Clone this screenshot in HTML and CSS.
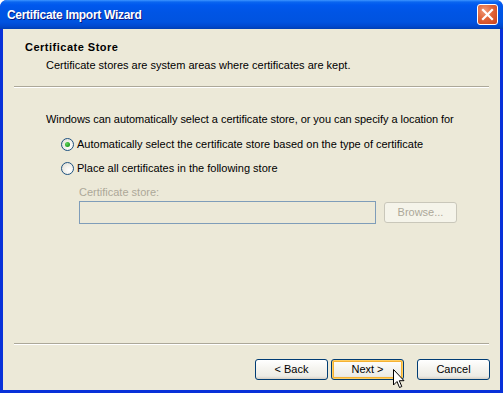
FILE: index.html
```html
<!DOCTYPE html>
<html lang="en">

<head>
    <meta charset="UTF-8">
    <title>Certificate Import Wizard</title>
    <link rel="stylesheet" href="styles.css">
</head>

<body>
    <div class="window">
        <div class="titlebar">
            <span class="title">Certificate Import Wizard</span>
            <div class="close-btn">
                <svg width="13" height="13" viewBox="0 0 13 13">
                    <path d="M2 2 L11 11 M11 2 L2 11" stroke="#fff" stroke-width="2.2" stroke-linecap="square" />
                </svg>
            </div>
        </div>
        <div class="client">
            <div class="header">
                <div class="header-title">Certificate Store</div>
                <div class="header-sub">Certificate stores are system areas where certificates are kept.</div>
            </div>
            <div class="separator"></div>
            <div class="body">
                <div class="intro">Windows can automatically select a certificate store, or you can specify a location for</div>
                <div class="radio-row">
                    <span class="radio checked"></span>
                    <span>Automatically select the certificate store based on the type of certificate</span>
                </div>
                <div class="radio-row">
                    <span class="radio"></span>
                    <span>Place all certificates in the following store</span>
                </div>
                <div class="store-group">
                    <div class="store-label">Certificate store:</div>
                    <div class="store-row">
                        <div class="store-input"></div>
                        <div class="btn disabled">Browse...</div>
                    </div>
                </div>
            </div>
            <div class="separator"></div>
            <div class="footer">
                <div class="btn">&lt; Back</div>
                <div class="btn default">Next &gt;</div>
                <div class="btn cancel">Cancel</div>
            </div>
        </div>
        <svg class="cursor" width="13" height="20" viewBox="0 0 13 20">
            <path d="M0.5 0.5 L0.5 16 L4 12.5 L6.5 18.5 L8.8 17.5 L6.3 11.7 L11 11.7 Z" fill="#fff" stroke="#000" stroke-width="1" stroke-linejoin="miter" />
        </svg>
    </div>
</body>

</html>
```

FILE: styles.css
```css
body {
    margin: 0;
    padding: 0;
    background: #fff;
    font-family: "Liberation Sans", Arial, sans-serif;
    font-size: 11px;
    color: #000;
}

.window {
    position: relative;
    width: 503px;
    height: 393px;
    box-sizing: border-box;
    display: flex;
    flex-direction: column;
    background: #0831d9;
    border-radius: 7px 7px 0 0;
    overflow: hidden;
}

.titlebar {
    height: 29px;
    flex: none;
    display: flex;
    align-items: center;
    justify-content: space-between;
    padding: 0 5px 0 7px;
    background: linear-gradient(to bottom, #3d95ff 0px, #0a66f0 2px, #0058ee 5px, #0055e5 12px, #0053e0 22px, #0049d0 26px, #003fb4 29px);
}

.title {
    color: #fff;
    font-family: "Liberation Sans", Arial, sans-serif;
    font-weight: bold;
    font-size: 12px;
    letter-spacing: -0.3px;
    text-shadow: 1px 1px 0 #0a1883;
    margin-top: 1px;
}

.close-btn {
    width: 19px;
    height: 19px;
    border: 1px solid #fff;
    border-radius: 3px;
    background: radial-gradient(circle at 35% 30%, #f09a78 0%, #e06438 45%, #c8401a 100%);
    display: flex;
    align-items: center;
    justify-content: center;
}

.client {
    flex: 1;
    display: flex;
    flex-direction: column;
    background: #ece9d8;
    margin: 0 3px 3px 3px;
    line-height: 13px;
}

.header {
    padding: 12px 0 14px 22px;
}

.header-title {
    font-weight: bold;
    letter-spacing: 0.5px;
}

.header-sub {
    margin-top: 5px;
    padding-left: 21px;
}

.separator {
    height: 1px;
    margin: 0 11px;
    background: #aca899;
    border-bottom: 1px solid #fff;
}

.body {
    flex: 1;
    padding: 25px 0 0 43px;
}

.intro {
    letter-spacing: -0.05px;
}

.radio-row {
    display: flex;
    align-items: center;
    gap: 3px;
    margin-top: 11px;
    padding-left: 15px;
}

.intro + .radio-row {
    margin-top: 12px;
}

.radio {
    width: 11px;
    height: 11px;
    border: 1px solid #1c5180;
    border-radius: 50%;
    background: radial-gradient(circle at 65% 65%, #fff 0%, #f4f3ee 40%, #dcdad0 100%);
    display: flex;
    align-items: center;
    justify-content: center;
}

.radio.checked::after {
    content: "";
    width: 5px;
    height: 5px;
    border-radius: 50%;
    background: radial-gradient(circle at 35% 35%, #62d45e 0%, #2aa428 60%, #1a8a1a 100%);
}

.store-group {
    padding-left: 33px;
    margin-top: 11px;
}

.store-label {
    color: #aca899;
}

.store-row {
    display: flex;
    align-items: center;
    gap: 8px;
    margin-top: 2px;
}

.store-input {
    width: 295px;
    height: 21px;
    border: 1px solid #7f9db9;
}

.btn {
    width: 71px;
    height: 19px;
    border: 1px solid #003c74;
    border-radius: 3px;
    background: linear-gradient(to bottom, #ffffff 0%, #f6f5f1 40%, #ecebe5 85%, #d6d0c5 100%);
    display: flex;
    align-items: center;
    justify-content: center;
}

.btn.disabled {
    color: #aca899;
    border-color: #c9c7ba;
    background: #f5f4ea;
}

.btn.default {
    box-shadow: inset 0 0 0 1px #ffcf64, inset 0 0 0 2px #f5b233;
}

.footer {
    display: flex;
    justify-content: flex-end;
    padding: 14px 10px 10px 0;
    gap: 3px;
}

.btn.cancel {
    margin-left: 10px;
}

.cursor {
    position: absolute;
    left: 393px;
    top: 369px;
}
```
